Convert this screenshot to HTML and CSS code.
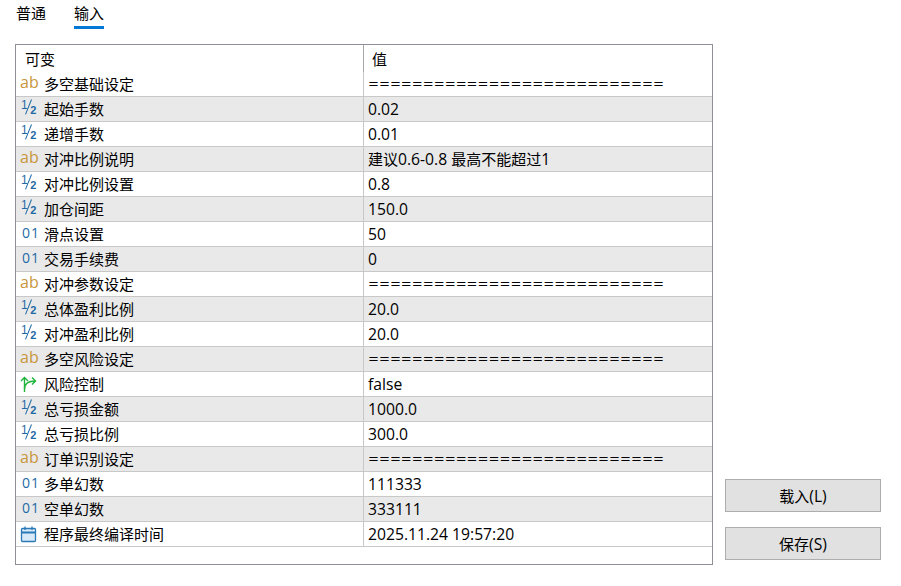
FILE: index.html
```html
<!DOCTYPE html>
<html>
<head>
<meta charset="UTF-8">
<title>输入</title>
<link rel="stylesheet" href="styles.css">
</head>
<body>
	<div class="tabs">
		<div class="tab">普通</div>
		<div class="tab active">输入</div>
	</div>

	<div class="main">
		<div class="grid">
			<div class="head">
				<div class="col-name">可变</div>
				<div class="col-val">值</div>
			</div>
			<div class="row"><div class="name"><span class="ic ab">ab</span>多空基础设定</div><div class="val sep">===========================</div></div>
			<div class="row alt"><div class="name"><span class="ic half"><i>1</i><b></b><u>2</u></span>起始手数</div><div class="val">0.02</div></div>
			<div class="row"><div class="name"><span class="ic half"><i>1</i><b></b><u>2</u></span>递增手数</div><div class="val">0.01</div></div>
			<div class="row alt"><div class="name"><span class="ic ab">ab</span>对冲比例说明</div><div class="val"><span class="cjk">建议</span>0.6-0.8 <span class="cjk">最高不能超过</span>1</div></div>
			<div class="row"><div class="name"><span class="ic half"><i>1</i><b></b><u>2</u></span>对冲比例设置</div><div class="val">0.8</div></div>
			<div class="row alt"><div class="name"><span class="ic half"><i>1</i><b></b><u>2</u></span>加仓间距</div><div class="val">150.0</div></div>
			<div class="row"><div class="name"><span class="ic num">01</span>滑点设置</div><div class="val">50</div></div>
			<div class="row alt"><div class="name"><span class="ic num">01</span>交易手续费</div><div class="val">0</div></div>
			<div class="row"><div class="name"><span class="ic ab">ab</span>对冲参数设定</div><div class="val sep">===========================</div></div>
			<div class="row alt"><div class="name"><span class="ic half"><i>1</i><b></b><u>2</u></span>总体盈利比例</div><div class="val">20.0</div></div>
			<div class="row"><div class="name"><span class="ic half"><i>1</i><b></b><u>2</u></span>对冲盈利比例</div><div class="val">20.0</div></div>
			<div class="row alt"><div class="name"><span class="ic ab">ab</span>多空风险设定</div><div class="val sep">===========================</div></div>
			<div class="row">
				<div class="name">
					<span class="ic">
						<svg width="18" height="16" viewBox="0 0 18 16" fill="none" stroke="#1eb43c" stroke-width="1.4">
							<path d="M4.5 16V1.5M1 5l3.5-3.5L8 5"/>
							<path d="M4.5 13C4.5 8 8 5 15.5 5M12 1.5L15.5 5 12 8.5"/>
						</svg>
					</span>风险控制
				</div>
				<div class="val">false</div>
			</div>
			<div class="row alt"><div class="name"><span class="ic half"><i>1</i><b></b><u>2</u></span>总亏损金额</div><div class="val">1000.0</div></div>
			<div class="row"><div class="name"><span class="ic half"><i>1</i><b></b><u>2</u></span>总亏损比例</div><div class="val">300.0</div></div>
			<div class="row alt"><div class="name"><span class="ic ab">ab</span>订单识别设定</div><div class="val sep">===========================</div></div>
			<div class="row"><div class="name"><span class="ic num">01</span>多单幻数</div><div class="val">111333</div></div>
			<div class="row alt"><div class="name"><span class="ic num">01</span>空单幻数</div><div class="val">333111</div></div>
			<div class="row">
				<div class="name">
					<span class="ic">
						<svg width="17" height="17" viewBox="0 0 17 17" fill="none" stroke="#2a7ab8" stroke-width="1.3">
							<rect x="1.5" y="2.5" width="14" height="13" rx="1" fill="#d8e9f7"/>
							<path d="M1.5 6.5h14" stroke-width="2"/>
							<path d="M5 0.5v3.5M12 0.5v3.5"/>
						</svg>
					</span>程序最终编译时间
				</div>
				<div class="val">2025.11.24 19:57:20</div>
			</div>
		</div>

		<div class="side">
			<div class="btn">载入<span class="lat">(L)</span></div>
			<div class="btn">保存<span class="lat">(S)</span></div>
		</div>
	</div>
</body>
</html>
```

FILE: styles.css
```css
body{margin:0;background:#fff;color:#000;font-family:"Open Sans","Noto Sans CJK SC",sans-serif;font-size:15px;height:586px;overflow:hidden;}

/* 위쪽 탭 */
.tabs{display:flex;gap:28px;padding-left:16px;height:44px;}
.tab{height:29px;line-height:27px;box-sizing:border-box;}
.tab.active{border-bottom:3px solid #0078d4;}

.main{display:flex;align-items:flex-end;}

/* 표 */
.grid{width:698px;height:521px;margin-left:15px;border:1px solid #8f8f98;box-sizing:border-box;}
.head{display:flex;height:27px;line-height:28px;}
.col-name{width:348px;padding-left:9px;box-sizing:border-box;border-right:1px solid #a8a8a8;}
.col-val{padding-left:8px;}
.row{display:flex;height:25px;box-sizing:border-box;border-bottom:1px solid #c8c8c8;line-height:24px;}
.row.alt{background:#e9e9e9;}
.name{width:348px;display:flex;align-items:flex-start;padding-left:4px;box-sizing:border-box;border-right:1px solid #c8c8c8;line-height:24px;}
.val{padding-left:4px;font-size:15.7px;}
.val .cjk{font-size:15px;}
.val.sep{font-family:"DejaVu Sans",sans-serif;font-size:13.08px;}

/* 아이콘 */
.ic{width:24px;flex:none;display:flex;align-items:center;height:24px;}
.ab{color:#c8963c;font-size:16px;margin-top:-2px;}
.num{color:#1f6aa5;font-size:14px;font-weight:500;padding-left:2px;box-sizing:border-box;margin-top:-1px;letter-spacing:1px;}

/* 1/2 아이콘 */
.half{color:#1f6aa5;line-height:1;font-family:"Liberation Sans",sans-serif;padding-left:1px;box-sizing:border-box;}
.half i{font-style:normal;font-size:12px;align-self:flex-start;margin-top:2px;width:7px;}
.half b{display:block;width:1.3px;height:16px;background:#1f6aa5;transform:rotate(22deg);margin:-4px 1px 0 0;}
.half u{text-decoration:none;font-size:11px;font-weight:bold;align-self:flex-end;margin-bottom:5px;}

/* 오른쪽 버튼 */
.side{display:flex;flex-direction:column;gap:15px;margin-left:12px;margin-bottom:5px;}
.btn{width:156px;height:33px;line-height:32px;text-align:center;background:#e1e1e1;border:1px solid #adadad;box-sizing:border-box;}
.btn .lat{font-size:15.7px;}
```
